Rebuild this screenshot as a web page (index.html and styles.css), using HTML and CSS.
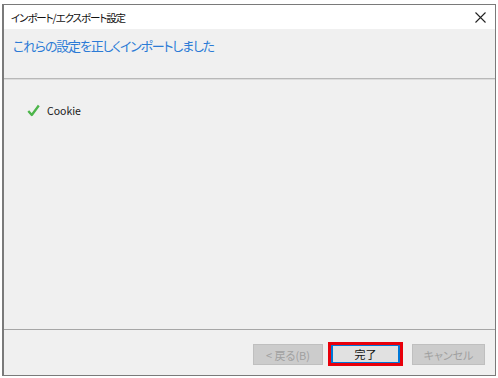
FILE: index.html
```html
<!DOCTYPE html>
<html lang="ja">
<head>
<meta charset="utf-8">
<link rel="stylesheet" href="styles.css">
</head>
<body>
<div class="window">
  <div class="titlebar">
    <span class="title">インポート/エクスポート設定</span>
    <svg class="close" width="11" height="11" viewBox="0 0 11 11"><path d="M0.5 0.5 L10.5 10.5 M10.5 0.5 L0.5 10.5" stroke="#222" stroke-width="1.1" fill="none"/></svg>
  </div>
  <div class="header">
    <span class="heading">これらの設定を正しくインポートしました</span>
  </div>
  <div class="content">
    <div class="item">
      <svg class="check" width="13" height="13" viewBox="0 0 13 13"><path d="M1.3 7 L4.8 11 L11.8 1.5" stroke="#4cb54a" stroke-width="2.3" fill="none" stroke-linejoin="round"/></svg>
      <span class="label">Cookie</span>
    </div>
  </div>
  <div class="footer">
    <button class="btn disabled back">&lt;&nbsp;戻る(B)</button>
    <span class="focus-ring"><button class="btn primary">完了</button></span>
    <button class="btn disabled cancel">キャンセル</button>
  </div>
</div>
</body>
</html>
```
FILE: styles.css
```css
html, body {
  margin: 0;
  padding: 0;
  background: #ffffff;
}
body {
  font-family: "Noto Sans CJK JP", "Noto Sans", sans-serif;
  padding: 4px 0 0 2px;
}
.window {
  width: 491px;
  height: 370px;
  border: 1px solid #7a7a7a;
  border-left-width: 2px;
  display: flex;
  flex-direction: column;
  background: #f0f0f0;
}
.titlebar {
  height: 24px;
  background: #ffffff;
  display: flex;
  align-items: center;
  justify-content: space-between;
  padding: 0 9px 0 7px;
}
.title {
  font-size: 10.5px;
  color: #111;
  font-feature-settings: "palt";
  letter-spacing: -1.1px;
}
.close {
  display: block;
}
.header {
  height: 50px;
  background: #f0f0f0;
  border-bottom: 1px solid #b8b8b8;
  box-shadow: 0 1px 0 #dcdcdc;
  box-sizing: border-box;
  padding: 3px 0 0 9px;
}
.heading {
  font-size: 13px;
  color: #2b7bd6;
  font-feature-settings: "palt";
  letter-spacing: -1.2px;
}
.content {
  flex: 1;
  margin-top: 1px;
  padding: 23px 0 0 23px;
  border-bottom: 1px solid #a6a6a6;
}
.item {
  display: flex;
  align-items: center;
  gap: 7px;
}
.check {
  display: block;
}
.label {
  font-size: 10.5px;
  color: #1a1a1a;
}
.footer {
  height: 45px;
  display: flex;
  align-items: flex-start;
  justify-content: flex-end;
  padding: 13px 10px 0 0;
  box-sizing: border-box;
}
.btn {
  font-family: "Noto Sans CJK JP", "Noto Sans", sans-serif;
  font-size: 11px;
  font-feature-settings: "palt";
  height: 21px;
  padding: 0;
  margin: 0;
  box-sizing: border-box;
  display: flex;
  align-items: center;
  justify-content: center;
}
.disabled {
  margin-top: 1px;
  background: #cccccc;
  border: 1px solid #bfbfbf;
  color: #a0a0a0;
}
.back {
  width: 70px;
  margin-right: 5px;
}
.cancel {
  width: 73px;
  margin-left: 9px;
}
.focus-ring {
  display: block;
  border: 3px solid #e8000b;
  width: 75px;
  height: 24px;
  box-sizing: border-box;
  margin-top: -1px;
}
.primary {
  width: 69px;
  height: 18px;
  background: #e1e1e1;
  border: 1px solid #0078d7;
  border-left-width: 2px;
  border-right-width: 2px;
  color: #111;
}
```
